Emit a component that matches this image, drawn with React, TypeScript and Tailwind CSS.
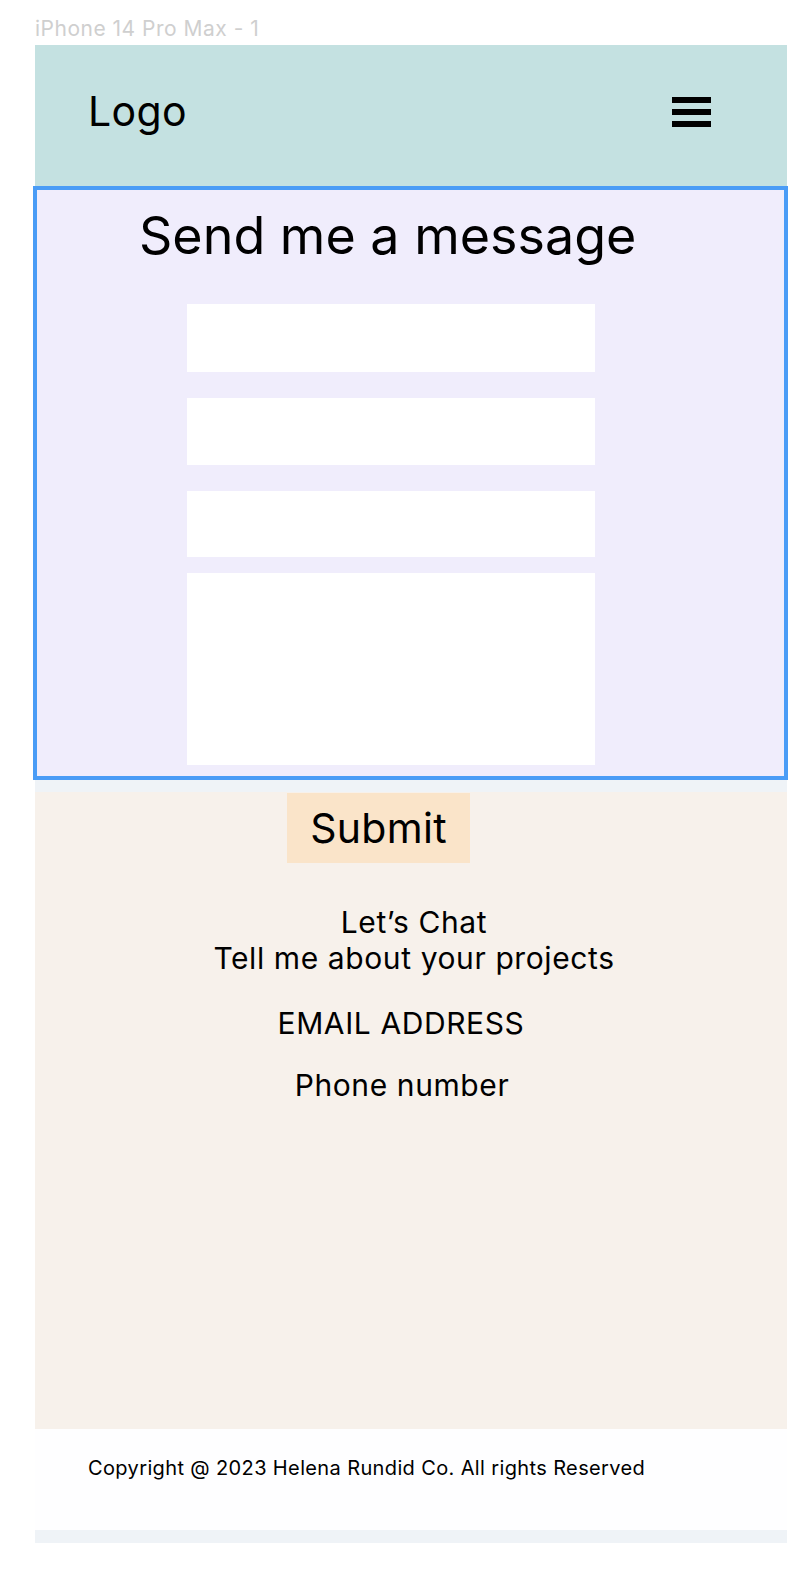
const FIELDS = [
  { h: "h-[68px]", mt: "mt-[37px]" },
  { h: "h-[67px]", mt: "mt-[26px]" },
  { h: "h-[66px]", mt: "mt-[26px]" },
  { h: "h-[192px]", mt: "mt-[16px]" },
];

export default function App() {
  return (
    <div className="min-h-[1586px] w-full bg-white font-[Inter,sans-serif] text-black">
      <div className="h-[45px] pl-[35px] pt-[16px] text-[21px] leading-[25px] tracking-[0.5px] text-[#cfcfcf]">iPhone 14 Pro Max - 1</div>

      <div className="ml-[35px] w-[752px] bg-[#eff3f7]">
        {/* header */}
        <header className="flex h-[141px] justify-between bg-[#c4e1e1] pl-[53px] pr-[76px]">
          <div className="mt-[42px] text-[41px] leading-[48px] tracking-[0.4px]">Logo</div>
          <div className="mt-[52px] flex w-[39px] flex-col gap-[6px]">
            <span className="h-[6px] w-full bg-black" />
            <span className="h-[6px] w-full bg-black" />
            <span className="h-[6px] w-full bg-black" />
          </div>
        </header>

        {/* form */}
        <section className="-ml-[2px] w-[755px] border-[4px] border-[#4a9cf6] bg-[#f0edfc] pb-[11px] pl-[102px] pt-[14px]">
          <h1 className="text-[52px] font-normal leading-[63px]">Send me a message</h1>
          <div className="pl-[48px]">
            {FIELDS.map((f, i) => (
              <div key={i} className={`${f.h} ${f.mt} w-[408px] bg-white`} />
            ))}
          </div>
        </section>

        <div className="h-[12px]" />

        {/* contact */}
        <section className="flex h-[637px] flex-col bg-[#f7f1eb] pt-[1px]">
          <button className="ml-[252px] flex h-[70px] w-[183px] items-center justify-center bg-[#fae4c9] text-[41px] leading-[50px] tracking-[0.3px]">
            Submit
          </button>
          <div className="mt-[41px] pl-[6px] text-center text-[30px] leading-[36px] tracking-[0.6px]">
            <p>Let’s Chat</p>
            <p>Tell me about your projects</p>
          </div>
          <p className="mt-[29px] pr-[20px] text-center text-[30px] leading-[36px] tracking-[0.6px]">EMAIL ADDRESS</p>
          <p className="mt-[26px] pr-[18px] text-center text-[30px] leading-[36px] tracking-[0.6px]">Phone number</p>
        </section>

        {/* footer */}
        <footer className="h-[101px] bg-[#fefeff] pl-[53px] pt-[27px] text-[20px] leading-[24px] tracking-[0.37px]">
          Copyright @ 2023 Helena Rundid Co. All rights Reserved
        </footer>
        <div className="h-[13px]" />
      </div>
    </div>
  );
}
